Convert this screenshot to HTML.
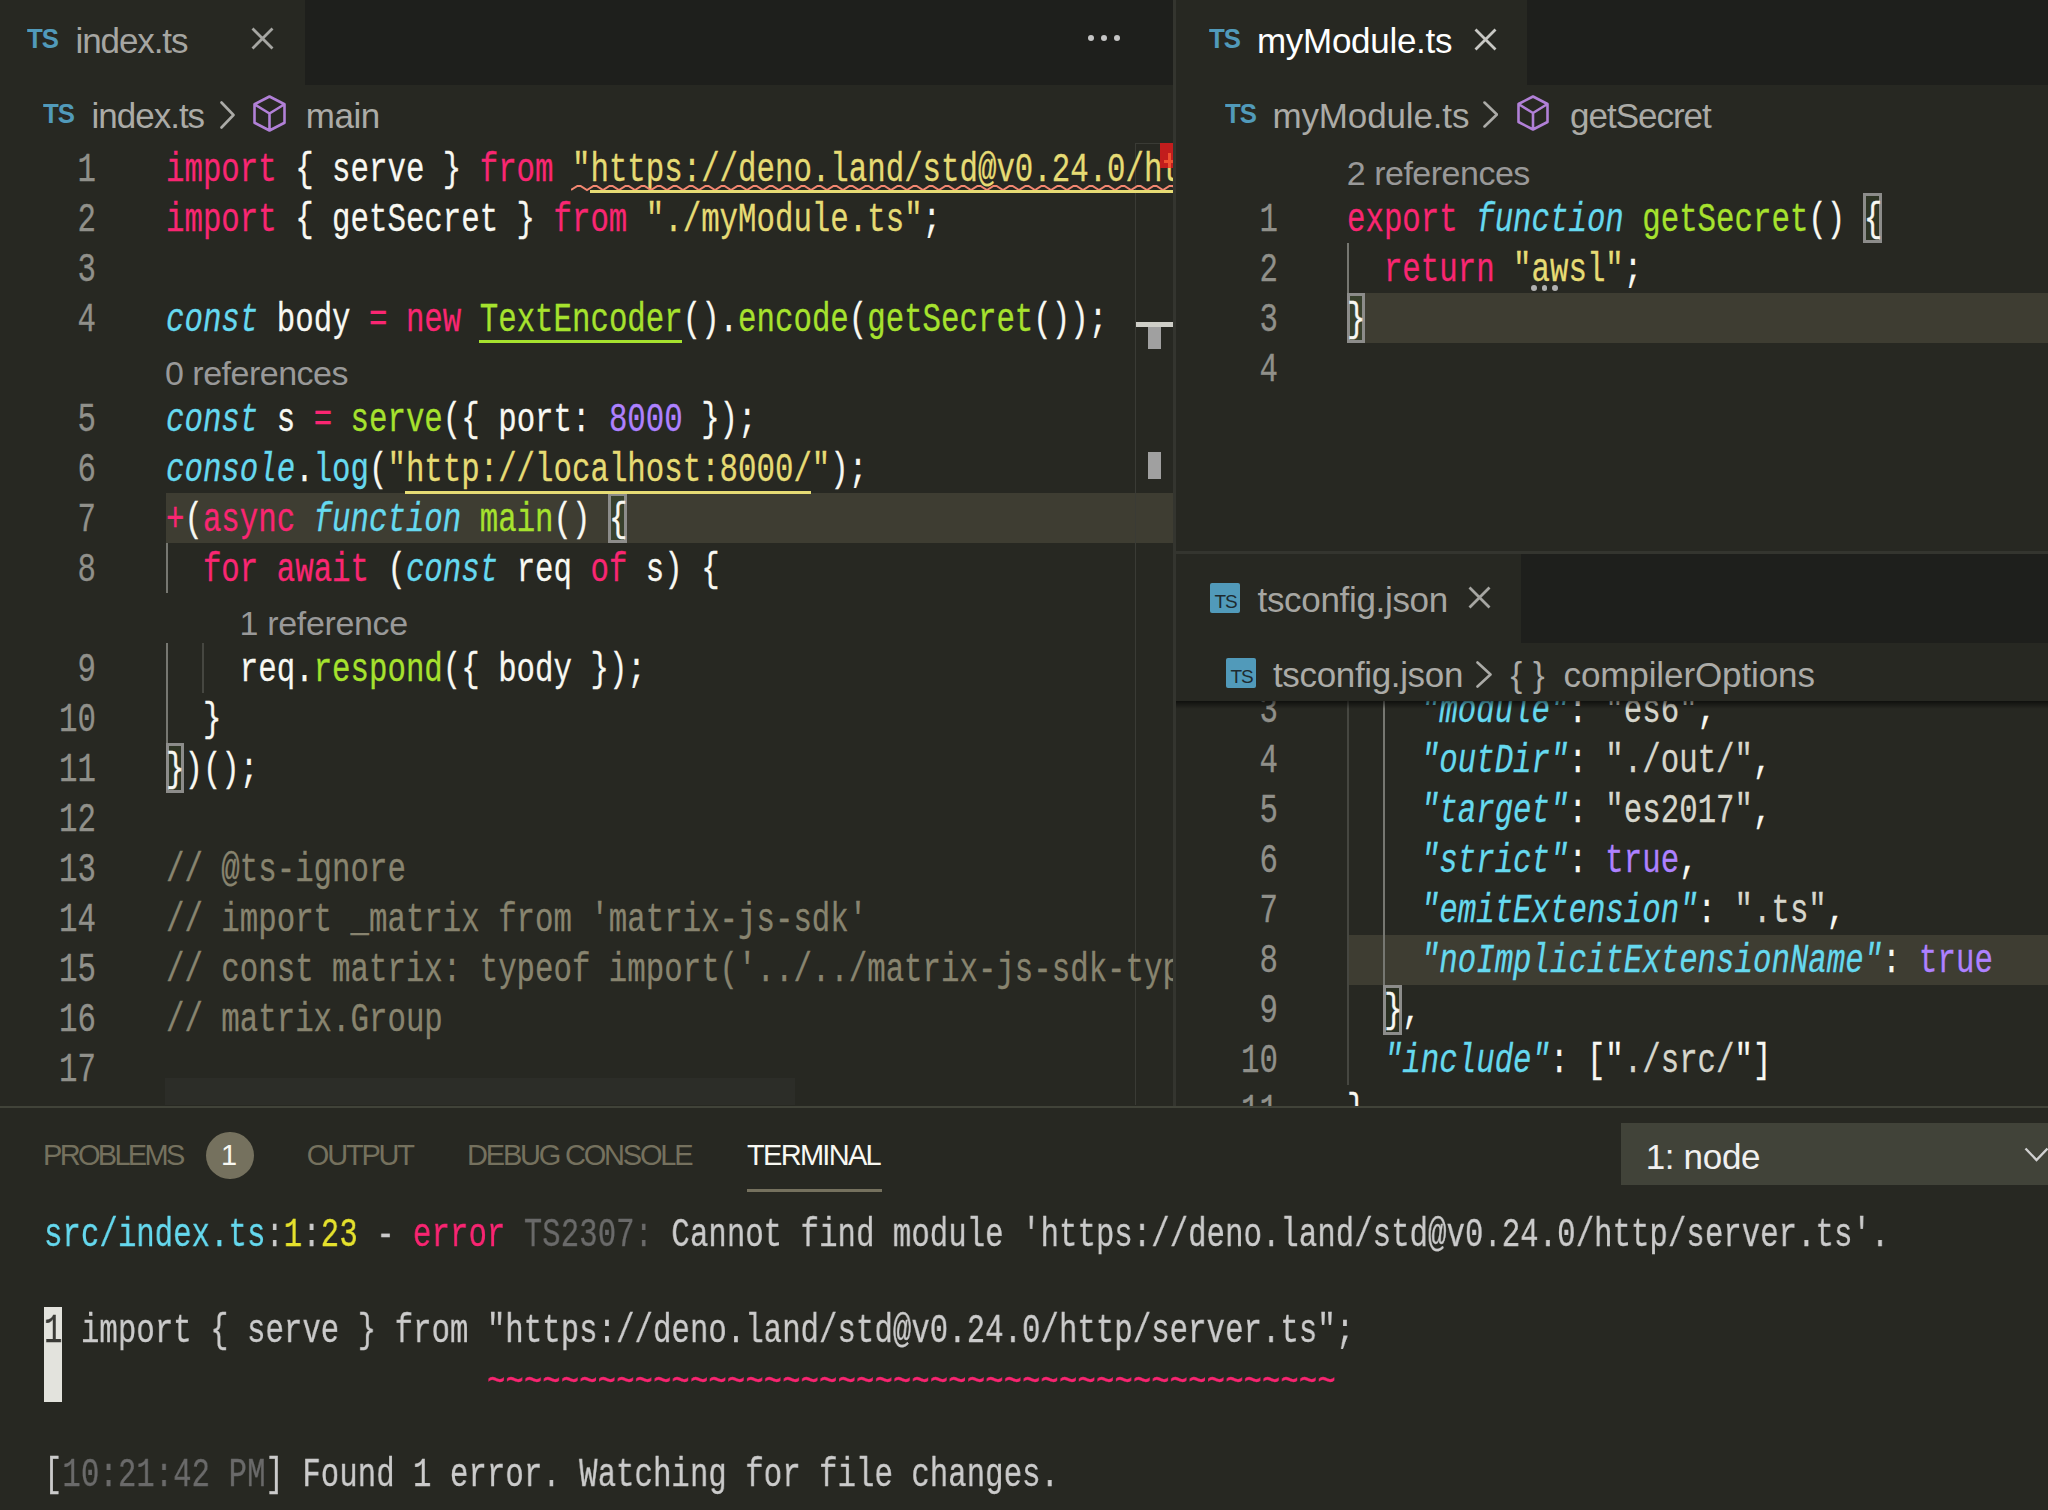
<!DOCTYPE html>
<html><head><meta charset="utf-8"><style>
html,body{margin:0;padding:0}
body{width:2048px;height:1510px;background:#272822;position:relative;overflow:hidden}
body>div,body>svg{position:absolute}
.code{font-family:"Liberation Mono",monospace;font-size:41px;line-height:50px;white-space:pre;color:#f8f8f2;transform:scaleX(0.75000);transform-origin:0 0;-webkit-text-stroke:0.3px currentColor}
.ui{font-family:"Liberation Sans",sans-serif;white-space:pre;transform-origin:0 0}
.kw{color:#f92672} .st{color:#66d9ef} .i{font-style:italic} .s{color:#e6db74} .fn{color:#a6e22e} .n{color:#ae81ff} .cm{color:#88846f} .jv{color:#d6d6cc}
.tcy{color:#66d9ef} .tyl{color:#e6e22e} .trd{color:#f92672} .tgr{color:#6b6b6b} .tfg{color:#cccccc} .tblk{color:#3a3a36} .term{opacity:0.999;will-change:transform}
</style></head><body>
<div style="left:0.00px;top:0.00px;width:1172.60px;height:85.00px;background:#1e1f1c;"></div>
<div style="left:0.00px;top:0.00px;width:305.00px;height:85.00px;background:#272822;"></div>
<div class="ui" style="left:27.00px;top:22.00px;font-size:28px;line-height:33px;color:#519aba;font-weight:bold;letter-spacing:-1px;transform:scaleX(0.92)">TS</div>
<div class="ui" style="left:75.50px;top:23.17px;font-size:35px;line-height:35px;color:#a6a6a2;letter-spacing:-1.1px;transform:scaleX(1.0);font-weight:normal">index.ts</div>
<svg style="left:251px;top:27px" width="23" height="23" viewBox="0 0 23 23"><path d="M1.5 1.5L21.5 21.5M21.5 1.5L1.5 21.5" stroke="#a6a6a2" stroke-width="2.8" fill="none"/></svg>
<div style="left:1087.9px;top:35.3px;width:6.2px;height:6.2px;border-radius:50%;background:#c5c5c5"></div>
<div style="left:1100.9px;top:35.3px;width:6.2px;height:6.2px;border-radius:50%;background:#c5c5c5"></div>
<div style="left:1114.3px;top:35.3px;width:6.2px;height:6.2px;border-radius:50%;background:#c5c5c5"></div>
<div class="ui" style="left:43.00px;top:98.00px;font-size:28px;line-height:32px;color:#519aba;font-weight:bold;letter-spacing:-1px;transform:scaleX(0.92)">TS</div>
<div class="ui" style="left:91.50px;top:98.37px;font-size:35px;line-height:35px;color:#ababa7;letter-spacing:-1.0px;transform:scaleX(1.0);font-weight:normal">index.ts</div>
<svg style="left:219.5px;top:101px" width="15" height="28" viewBox="0 0 15 28"><path d="M1.5 1.5L13.5 14.0L1.5 26.5" stroke="#ababa7" stroke-width="2.6" fill="none" stroke-linecap="round" stroke-linejoin="round"/></svg>
<svg style="left:253px;top:95px" width="33" height="37" viewBox="0 0 33 37"><path d="M16.5 1.5L31.5 9.25L31.5 27.75L16.5 35.5L1.5 27.75L1.5 9.25Z M1.5 9.25L16.5 18.5L31.5 9.25 M16.5 18.5L16.5 35.5" stroke="#b180d7" stroke-width="2.6" fill="none" stroke-linejoin="round"/></svg>
<div class="ui" style="left:305.80px;top:98.37px;font-size:35px;line-height:35px;color:#ababa7;letter-spacing:-0.5px;transform:scaleX(1.0);font-weight:normal">main</div>
<div style="left:165.50px;top:493.00px;width:1007.10px;height:50.00px;background:#3e3d32;"></div>
<div style="left:165.50px;top:543.00px;width:2.00px;height:50.00px;background:#767771;"></div>
<div style="left:165.50px;top:643.00px;width:2.00px;height:100.00px;background:#767771;"></div>
<div style="left:202.40px;top:643.00px;width:2.00px;height:50.00px;background:#464741;"></div>
<div style="left:608.30px;top:493.00px;width:18.45px;height:50px;box-sizing:border-box;border:3px solid #8c8c8a;background:#38412d"></div>
<div style="left:165.50px;top:743.00px;width:18.45px;height:50px;box-sizing:border-box;border:3px solid #8c8c8a;background:#2e3525"></div>
<div style="left:165.00px;top:1078.00px;width:630.00px;height:27.00px;background:#2c2d28;"></div>
<div style="left:1135.30px;top:143.00px;width:1.00px;height:962.00px;background:#3a3b35;"></div>
<div style="left:1135.30px;top:143.00px;width:25.00px;height:1.00px;background:#3a3b35;"></div>
<div class="code ln" style="left:-104.00px;top:144.59px;width:266.67px;color:#90908a"><span style="float:right">1</span></div>
<div class="code ln" style="left:-104.00px;top:194.59px;width:266.67px;color:#90908a"><span style="float:right">2</span></div>
<div class="code ln" style="left:-104.00px;top:244.59px;width:266.67px;color:#90908a"><span style="float:right">3</span></div>
<div class="code ln" style="left:-104.00px;top:294.59px;width:266.67px;color:#90908a"><span style="float:right">4</span></div>
<div class="code ln" style="left:-104.00px;top:394.59px;width:266.67px;color:#90908a"><span style="float:right">5</span></div>
<div class="code ln" style="left:-104.00px;top:444.59px;width:266.67px;color:#90908a"><span style="float:right">6</span></div>
<div class="code ln" style="left:-104.00px;top:494.59px;width:266.67px;color:#90908a"><span style="float:right">7</span></div>
<div class="code ln" style="left:-104.00px;top:544.59px;width:266.67px;color:#90908a"><span style="float:right">8</span></div>
<div class="code ln" style="left:-104.00px;top:644.59px;width:266.67px;color:#90908a"><span style="float:right">9</span></div>
<div class="code ln" style="left:-104.00px;top:694.59px;width:266.67px;color:#90908a"><span style="float:right">10</span></div>
<div class="code ln" style="left:-104.00px;top:744.59px;width:266.67px;color:#90908a"><span style="float:right">11</span></div>
<div class="code ln" style="left:-104.00px;top:794.59px;width:266.67px;color:#90908a"><span style="float:right">12</span></div>
<div class="code ln" style="left:-104.00px;top:844.59px;width:266.67px;color:#90908a"><span style="float:right">13</span></div>
<div class="code ln" style="left:-104.00px;top:894.59px;width:266.67px;color:#90908a"><span style="float:right">14</span></div>
<div class="code ln" style="left:-104.00px;top:944.59px;width:266.67px;color:#90908a"><span style="float:right">15</span></div>
<div class="code ln" style="left:-104.00px;top:994.59px;width:266.67px;color:#90908a"><span style="float:right">16</span></div>
<div class="code ln" style="left:-104.00px;top:1044.59px;width:266.67px;color:#90908a"><span style="float:right">17</span></div>
<div class="code " style="left:165.50px;top:144.59px"><span class="kw">import</span> { serve } <span class="kw">from</span> <span class="s">"https://deno.land/std@v0.24.0/ht</span></div>
<div class="code " style="left:165.50px;top:194.59px"><span class="kw">import</span> { getSecret } <span class="kw">from</span> <span class="s">"./myModule.ts"</span>;</div>
<div class="code " style="left:165.50px;top:294.59px"><span class="st i">const</span> body <span class="kw">=</span> <span class="kw">new</span> <span class="fn">TextEncoder</span>().<span class="fn">encode</span>(<span class="fn">getSecret</span>());</div>
<div class="code " style="left:165.50px;top:394.59px"><span class="st i">const</span> s <span class="kw">=</span> <span class="fn">serve</span>({ port: <span class="n">8000</span> });</div>
<div class="code " style="left:165.50px;top:444.59px"><span class="st i">console</span>.<span class="st">log</span>(<span class="s">"http://localhost:8000/"</span>);</div>
<div class="code " style="left:165.50px;top:494.59px"><span class="kw">+</span>(<span class="kw">async</span> <span class="st i">function</span> <span class="fn">main</span>() {</div>
<div class="code " style="left:165.50px;top:544.59px">  <span class="kw">for</span> <span class="kw">await</span> (<span class="st i">const</span> req <span class="kw">of</span> s) {</div>
<div class="code " style="left:165.50px;top:644.59px">    req.<span class="fn">respond</span>({ body });</div>
<div class="code " style="left:165.50px;top:694.59px">  }</div>
<div class="code " style="left:165.50px;top:744.59px">})();</div>
<div class="code " style="left:165.50px;top:844.59px"><span class="cm">// @ts-ignore</span></div>
<div class="code " style="left:165.50px;top:894.59px"><span class="cm">// import _matrix from 'matrix-js-sdk'</span></div>
<div class="code " style="left:165.50px;top:944.59px"><span class="cm">// const matrix: typeof import('../../matrix-js-sdk-typ</span></div>
<div class="code " style="left:165.50px;top:994.59px"><span class="cm">// matrix.Group</span></div>
<div class="ui" style="left:165.00px;top:355.71px;font-size:34px;line-height:34px;color:#999999;letter-spacing:-0.5px;transform:scaleX(1.0);font-weight:normal">0 references</div>
<div class="ui" style="left:239.50px;top:605.71px;font-size:34px;line-height:34px;color:#999999;letter-spacing:-0.33px;transform:scaleX(1.0);font-weight:normal">1 reference</div>
<svg style="left:571.40px;top:184.50px" width="601.20" height="7" viewBox="0 0 601.20 7"><path d="M0 5 L8.0 0 L16.0 5 L24.0 0 L32.0 5 L40.0 0 L48.0 5 L56.0 0 L64.0 5 L72.0 0 L80.0 5 L88.0 0 L96.0 5 L104.0 0 L112.0 5 L120.0 0 L128.0 5 L136.0 0 L144.0 5 L152.0 0 L160.0 5 L168.0 0 L176.0 5 L184.0 0 L192.0 5 L200.0 0 L208.0 5 L216.0 0 L224.0 5 L232.0 0 L240.0 5 L248.0 0 L256.0 5 L264.0 0 L272.0 5 L280.0 0 L288.0 5 L296.0 0 L304.0 5 L312.0 0 L320.0 5 L328.0 0 L336.0 5 L344.0 0 L352.0 5 L360.0 0 L368.0 5 L376.0 0 L384.0 5 L392.0 0 L400.0 5 L408.0 0 L416.0 5 L424.0 0 L432.0 5 L440.0 0 L448.0 5 L456.0 0 L464.0 5 L472.0 0 L480.0 5 L488.0 0 L496.0 5 L504.0 0 L512.0 5 L520.0 0 L528.0 5 L536.0 0 L544.0 5 L552.0 0 L560.0 5 L568.0 0 L576.0 5 L584.0 0 L592.0 5 L600.0 0 L608.0 5 L616.0 0 L624.0 5" stroke="#f48771" stroke-width="2" fill="none"/></svg>
<div style="left:589.85px;top:189.60px;width:582.75px;height:3.00px;background:#e6db74;"></div>
<div style="left:479.15px;top:340.00px;width:202.95px;height:3.00px;background:#a6e22e;"></div>
<div style="left:405.35px;top:490.50px;width:405.90px;height:3.00px;background:#e6db74;"></div>
<div style="left:1160.40px;top:143.00px;width:12.20px;height:24.60px;background:#c21d1d;"></div>
<div style="left:1168.20px;top:152.70px;width:2.80px;height:14.90px;background:#f05030;"></div>
<div style="left:1164.00px;top:160.30px;width:8.60px;height:2.60px;background:#f05030;"></div>
<div style="left:1136.00px;top:321.50px;width:36.60px;height:5.00px;background:#cfcfc8;"></div>
<div style="left:1148.20px;top:326.50px;width:12.40px;height:22.50px;background:#a0a0a0;"></div>
<div style="left:1148.20px;top:452.30px;width:12.40px;height:26.70px;background:#a0a0a0;"></div>
<div style="left:1172.60px;top:0.00px;width:3.00px;height:1105.50px;background:#34352f;"></div>
<div style="left:1175.60px;top:0.00px;width:872.40px;height:1105.50px;background:#272822;"></div>
<div style="left:1175.60px;top:0.00px;width:872.40px;height:85.00px;background:#1e1f1c;"></div>
<div style="left:1175.60px;top:0.00px;width:351.40px;height:85.00px;background:#272822;"></div>
<div class="ui" style="left:1209.40px;top:22.70px;font-size:28px;line-height:32px;color:#519aba;font-weight:bold;letter-spacing:-1px;transform:scaleX(0.92)">TS</div>
<div class="ui" style="left:1257.00px;top:23.17px;font-size:35px;line-height:35px;color:#ffffff;letter-spacing:-0.3px;transform:scaleX(1.0);font-weight:normal">myModule.ts</div>
<svg style="left:1474px;top:27.5px" width="23" height="23" viewBox="0 0 23 23"><path d="M1.5 1.5L21.5 21.5M21.5 1.5L1.5 21.5" stroke="#c8c8c4" stroke-width="2.8" fill="none"/></svg>
<div class="ui" style="left:1225.00px;top:97.70px;font-size:28px;line-height:32px;color:#519aba;font-weight:bold;letter-spacing:-1px;transform:scaleX(0.92)">TS</div>
<div class="ui" style="left:1272.50px;top:98.37px;font-size:35px;line-height:35px;color:#ababa7;letter-spacing:-0.15px;transform:scaleX(1.0);font-weight:normal">myModule.ts</div>
<svg style="left:1482.6px;top:101.4px" width="15.4" height="27" viewBox="0 0 15.4 27"><path d="M1.5 1.5L13.9 13.5L1.5 25.5" stroke="#ababa7" stroke-width="2.6" fill="none" stroke-linecap="round" stroke-linejoin="round"/></svg>
<svg style="left:1516.6px;top:95.2px" width="32" height="36" viewBox="0 0 32 36"><path d="M16.0 1.5L30.5 9.0L30.5 27.0L16.0 34.5L1.5 27.0L1.5 9.0Z M1.5 9.0L16.0 18.0L30.5 9.0 M16.0 18.0L16.0 34.5" stroke="#b180d7" stroke-width="2.6" fill="none" stroke-linejoin="round"/></svg>
<div class="ui" style="left:1570.00px;top:98.37px;font-size:35px;line-height:35px;color:#ababa7;letter-spacing:-1.0px;transform:scaleX(1.0);font-weight:normal">getSecret</div>
<div style="left:1346.50px;top:293.00px;width:701.50px;height:50.00px;background:#3e3d32;"></div>
<div style="left:1346.50px;top:243.00px;width:2.00px;height:50.00px;background:#767771;"></div>
<div style="left:1863.10px;top:193.00px;width:18.45px;height:50px;box-sizing:border-box;border:3px solid #8c8c8a;background:#2e3525"></div>
<div style="left:1346.50px;top:293.00px;width:18.45px;height:50px;box-sizing:border-box;border:3px solid #8c8c8a;background:#38412d"></div>
<div class="code ln" style="left:1077.50px;top:194.59px;width:266.67px;color:#90908a"><span style="float:right">1</span></div>
<div class="code ln" style="left:1077.50px;top:244.59px;width:266.67px;color:#90908a"><span style="float:right">2</span></div>
<div class="code ln" style="left:1077.50px;top:294.59px;width:266.67px;color:#90908a"><span style="float:right">3</span></div>
<div class="code ln" style="left:1077.50px;top:344.59px;width:266.67px;color:#90908a"><span style="float:right">4</span></div>
<div class="ui" style="left:1346.80px;top:156.21px;font-size:34px;line-height:34px;color:#999999;letter-spacing:-0.5px;transform:scaleX(1.0);font-weight:normal">2 references</div>
<div class="code " style="left:1346.50px;top:194.59px"><span class="kw">export</span> <span class="st i">function</span> <span class="fn">getSecret</span>() {</div>
<div class="code " style="left:1346.50px;top:244.59px">  <span class="kw">return</span> <span class="s">"awsl"</span>;</div>
<div class="code " style="left:1346.50px;top:294.59px">}</div>
<div style="left:1530.8px;top:285.4px;width:5.8px;height:5.8px;border-radius:50%;background:#b0b0b0"></div>
<div style="left:1541.6px;top:285.4px;width:5.8px;height:5.8px;border-radius:50%;background:#b0b0b0"></div>
<div style="left:1552.1px;top:285.4px;width:5.8px;height:5.8px;border-radius:50%;background:#b0b0b0"></div>
<div style="left:1175.60px;top:551.20px;width:872.40px;height:3.00px;background:#34352f;"></div>
<div style="left:1175.60px;top:554.20px;width:872.40px;height:88.80px;background:#1e1f1c;"></div>
<div style="left:1175.60px;top:554.20px;width:345.40px;height:88.80px;background:#272822;"></div>
<div style="left:1210.4px;top:583px;width:30px;height:30px;background:#519aba;border-radius:2px"></div>
<div class="ui" style="left:1214.4px;top:592px;font-size:19px;line-height:20px;color:#1e2a30;letter-spacing:-1px">TS</div>
<div class="ui" style="left:1257.50px;top:581.87px;font-size:35px;line-height:35px;color:#a6a6a2;letter-spacing:-0.32px;transform:scaleX(1.0);font-weight:normal">tsconfig.json</div>
<svg style="left:1468px;top:586px" width="23" height="23" viewBox="0 0 23 23"><path d="M1.5 1.5L21.5 21.5M21.5 1.5L1.5 21.5" stroke="#a6a6a2" stroke-width="2.8" fill="none"/></svg>
<div style="left:1346.50px;top:934.50px;width:701.50px;height:50.00px;background:#3e3d32;"></div>
<div style="left:1346.50px;top:701.00px;width:2.00px;height:383.50px;background:#464741;"></div>
<div style="left:1383.40px;top:701.00px;width:2.00px;height:283.50px;background:#767771;"></div>
<div style="left:1383.40px;top:984.50px;width:18.45px;height:50px;box-sizing:border-box;border:3px solid #8c8c8a;background:#2a3022"></div>
<div class="code ln" style="left:1077.50px;top:686.09px;width:266.67px;color:#90908a"><span style="float:right">3</span></div>
<div class="code ln" style="left:1077.50px;top:736.09px;width:266.67px;color:#90908a"><span style="float:right">4</span></div>
<div class="code ln" style="left:1077.50px;top:786.09px;width:266.67px;color:#90908a"><span style="float:right">5</span></div>
<div class="code ln" style="left:1077.50px;top:836.09px;width:266.67px;color:#90908a"><span style="float:right">6</span></div>
<div class="code ln" style="left:1077.50px;top:886.09px;width:266.67px;color:#90908a"><span style="float:right">7</span></div>
<div class="code ln" style="left:1077.50px;top:936.09px;width:266.67px;color:#90908a"><span style="float:right">8</span></div>
<div class="code ln" style="left:1077.50px;top:986.09px;width:266.67px;color:#90908a"><span style="float:right">9</span></div>
<div class="code ln" style="left:1077.50px;top:1036.09px;width:266.67px;color:#90908a"><span style="float:right">10</span></div>
<div class="code ln" style="left:1077.50px;top:1086.09px;width:266.67px;color:#90908a"><span style="float:right">11</span></div>
<div class="code " style="left:1346.50px;top:686.09px">    <span class="st i">"module"</span>: <span class="jv">"es6"</span>,</div>
<div class="code " style="left:1346.50px;top:736.09px">    <span class="st i">"outDir"</span>: <span class="jv">"./out/"</span>,</div>
<div class="code " style="left:1346.50px;top:786.09px">    <span class="st i">"target"</span>: <span class="jv">"es2017"</span>,</div>
<div class="code " style="left:1346.50px;top:836.09px">    <span class="st i">"strict"</span>: <span class="n">true</span>,</div>
<div class="code " style="left:1346.50px;top:886.09px">    <span class="st i">"emitExtension"</span>: <span class="jv">".ts"</span>,</div>
<div class="code " style="left:1346.50px;top:936.09px">    <span class="st i">"noImplicitExtensionName"</span>: <span class="n">true</span></div>
<div class="code " style="left:1346.50px;top:986.09px">  },</div>
<div class="code " style="left:1346.50px;top:1036.09px">  <span class="st i">"include"</span>: ["<span class="jv">./src/</span>"]</div>
<div class="code " style="left:1346.50px;top:1086.09px">}</div>
<div style="left:1175.60px;top:643.00px;width:872.40px;height:58.00px;background:#272822;"></div>
<div style="left:1226.4px;top:658px;width:30px;height:30px;background:#519aba;border-radius:2px"></div>
<div class="ui" style="left:1230.4px;top:667px;font-size:19px;line-height:20px;color:#1e2a30;letter-spacing:-1px">TS</div>
<div class="ui" style="left:1273.00px;top:657.37px;font-size:35px;line-height:35px;color:#ababa7;letter-spacing:-0.35px;transform:scaleX(1.0);font-weight:normal">tsconfig.json</div>
<svg style="left:1476px;top:660.5px" width="16" height="27" viewBox="0 0 16 27"><path d="M1.5 1.5L14.5 13.5L1.5 25.5" stroke="#ababa7" stroke-width="2.6" fill="none" stroke-linecap="round" stroke-linejoin="round"/></svg>
<div class="ui" style="left:1510.50px;top:657.37px;font-size:35px;line-height:35px;color:#ababa7;letter-spacing:0.5px;transform:scaleX(1.0);font-weight:normal">{ }</div>
<div class="ui" style="left:1563.50px;top:657.37px;font-size:35px;line-height:35px;color:#ababa7;letter-spacing:-0.1px;transform:scaleX(1.0);font-weight:normal">compilerOptions</div>
<div style="left:1175.6px;top:701px;width:873px;height:8px;background:linear-gradient(#00000099,#00000000)"></div>
<div style="left:0.00px;top:1105.50px;width:2048.00px;height:404.50px;background:#272822;"></div>
<div style="left:0.00px;top:1105.50px;width:2048.00px;height:2.60px;background:#414339;"></div>
<div class="ui" style="left:43.00px;top:1141.15px;font-size:29px;line-height:29px;color:#75715e;letter-spacing:-2.7px;transform:scaleX(1.0);font-weight:normal">PROBLEMS</div>
<div style="left:206px;top:1131.8px;width:48px;height:47.5px;border-radius:50%;background:#75715e"></div>
<div class="ui" style="left:221.00px;top:1141.45px;font-size:29px;line-height:29px;color:#f8f8f2;letter-spacing:0px;transform:scaleX(1.0);font-weight:normal">1</div>
<div class="ui" style="left:306.80px;top:1141.15px;font-size:29px;line-height:29px;color:#75715e;letter-spacing:-2.2px;transform:scaleX(1.0);font-weight:normal">OUTPUT</div>
<div class="ui" style="left:467.00px;top:1141.15px;font-size:29px;line-height:29px;color:#75715e;letter-spacing:-2.2px;transform:scaleX(1.0);font-weight:normal">DEBUG CONSOLE</div>
<div class="ui" style="left:747.00px;top:1141.15px;font-size:29px;line-height:29px;color:#f8f8f2;letter-spacing:-1.7px;transform:scaleX(1.0);font-weight:normal">TERMINAL</div>
<div style="left:747.00px;top:1189.30px;width:134.70px;height:3.00px;background:#75715e;"></div>
<div style="left:1620.80px;top:1123.00px;width:427.20px;height:62.30px;background:#414339;"></div>
<div class="ui" style="left:1645.70px;top:1139.37px;font-size:35px;line-height:35px;color:#f0f0f0;letter-spacing:-0.33px;transform:scaleX(1.0);font-weight:normal">1: node</div>
<svg style="left:2024px;top:1147px" width="26" height="16" viewBox="0 0 26 16"><path d="M1.5 1.5L12.5 13L23.5 1.5" stroke="#d0d0d0" stroke-width="2.4" fill="none"/></svg>
<div class="code term" style="left:44.00px;top:1210.49px"><span class="tcy">src/index.ts</span><span class="tfg">:</span><span class="tyl">1</span><span class="tfg">:</span><span class="tyl">23</span><span class="tfg"> - </span><span class="trd">error</span> <span class="tgr">TS2307:</span><span class="tfg"> Cannot find module 'https://deno.land/std@v0.24.0/http/server.ts'.</span></div>
<div style="left:43.90px;top:1307.00px;width:17.80px;height:95.00px;background:#e3e3dd;"></div>
<div class="code term" style="left:44.00px;top:1306.49px"><span class="tblk">1</span><span class="tfg"> import { serve } from "https://deno.land/std@v0.24.0/http/server.ts";</span></div>
<div class="code term" style="left:44.00px;top:1356.99px">                        <span class="trd">~~~~~~~~~~~~~~~~~~~~~~~~~~~~~~~~~~~~~~~~~~~~~~</span></div>
<div class="code term" style="left:44.00px;top:1450.49px"><span class="tfg">[</span><span class="tgr">10:21:42 PM</span><span class="tfg">]</span><span class="tfg"> Found 1 error. Watching for file changes.</span></div>
</body></html>
